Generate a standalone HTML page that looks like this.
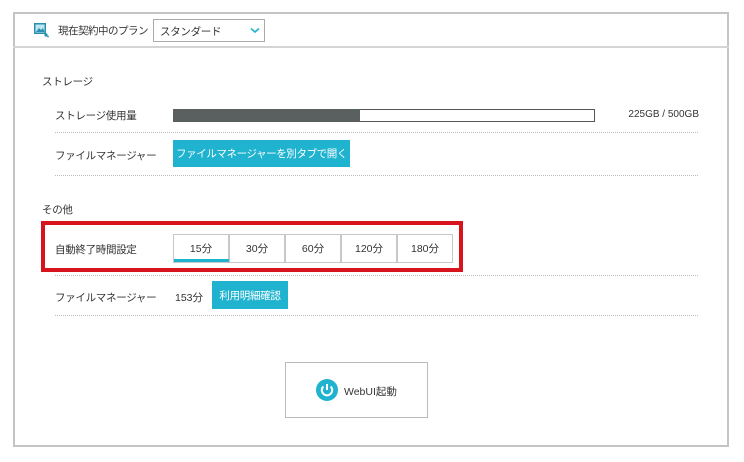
<!DOCTYPE html>
<html><head><meta charset="utf-8"><style>
*{margin:0;padding:0;box-sizing:border-box}
body{width:744px;height:462px;background:#fff;font-family:"Liberation Sans","Noto Sans CJK JP",sans-serif;font-size:10.5px;color:#333;position:relative;overflow:hidden;letter-spacing:-0.3px}
.a{position:absolute;white-space:nowrap}
.dot{position:absolute;left:55px;width:643px;border-top:1px dotted #bbb}
.btn{position:absolute;background:#1fb3cf;color:#fff;font-size:10.5px;display:flex;align-items:center;justify-content:center;white-space:nowrap}
.tab{position:absolute;top:234px;height:29px;width:56px;border:1px solid #c8c8c8;display:flex;align-items:center;justify-content:center;color:#333;letter-spacing:0}
</style></head><body>
<div class="a" style="left:13px;top:12px;width:716px;height:435px;border:2px solid #c4c4c4"></div>
<div class="a" style="left:13px;top:46px;width:716px;border-top:2px solid #d4d4d4"></div>
<svg class="a" style="left:33px;top:22px" width="16" height="16" viewBox="0 0 16 16"><rect x="1" y="1" width="12" height="11" fill="#2a8fb0"/><rect x="2.5" y="2.5" width="9" height="8" fill="#bfe6f2"/><path d="M3 10 L6 6 L8 8 L10 6 L11.5 10Z" fill="#2a8fb0"/><circle cx="13" cy="13" r="1.6" fill="#2a8fb0"/><circle cx="15" cy="14.5" r="0.9" fill="#2a8fb0"/></svg>
<div class="a" style="left:58px;top:23px;font-size:10.5px;letter-spacing:-0.5px">現在契約中のプラン</div>
<div class="a" style="left:153px;top:19px;width:112px;height:23px;border:1px solid #aaa"></div>
<div class="a" style="left:160px;top:24px">スタンダード</div>
<svg class="a" style="left:250px;top:27px" width="10" height="7"><path d="M1 1.5 L5 5 L9 1.5" fill="none" stroke="#1fb3cf" stroke-width="1.6"/></svg>
<div class="a" style="left:42px;top:74px">ストレージ</div>
<div class="a" style="left:55px;top:108px">ストレージ使用量</div>
<div class="a" style="left:173px;top:109px;width:422px;height:13px;border:1px solid #555;background:#fff"></div>
<div class="a" style="left:173px;top:109px;width:187px;height:13px;background:#5a5f60"></div>
<div class="a" style="right:45px;top:109px;font-size:10px;letter-spacing:0">225GB / 500GB</div>
<div class="dot" style="top:132px"></div>
<div class="a" style="left:55px;top:148px">ファイルマネージャー</div>
<div class="btn" style="left:173px;top:140px;width:177px;height:27px;letter-spacing:-0.4px">ファイルマネージャーを別タブで開く</div>
<div class="dot" style="top:175px"></div>
<div class="a" style="left:42px;top:202px">その他</div>
<div class="dot" style="top:275px"></div>
<div class="a" style="left:41px;top:221px;width:422px;height:51px;border:4px solid #d7141d;background:#fff"></div>
<div class="a" style="left:55px;top:242px">自動終了時間設定</div>
<div class="tab" style="left:173px">15分</div>
<div class="tab" style="left:229px">30分</div>
<div class="tab" style="left:285px">60分</div>
<div class="tab" style="left:341px">120分</div>
<div class="tab" style="left:397px">180分</div>
<div class="a" style="left:174px;top:259px;width:55px;height:3px;background:#1fb3cf"></div>
<div class="a" style="left:55px;top:290px">ファイルマネージャー</div>
<div class="a" style="left:175px;top:290px;letter-spacing:0">153分</div>
<div class="btn" style="left:212px;top:281px;width:76px;height:28px">利用明細確認</div>
<div class="dot" style="top:315px"></div>
<div class="a" style="left:285px;top:362px;width:143px;height:56px;border:1px solid #bbb"></div>
<svg class="a" style="left:315px;top:378px" width="24" height="24" viewBox="0 0 24 24"><circle cx="12" cy="12" r="11" fill="#1fb3cf"/><path d="M8.3 8.5 A5.2 5.2 0 1 0 15.7 8.5" fill="none" stroke="#fff" stroke-width="2"/><path d="M12 6 V12" stroke="#fff" stroke-width="2"/></svg>
<div class="a" style="left:344px;top:384px;letter-spacing:0">WebUI起動</div>
</body></html>
